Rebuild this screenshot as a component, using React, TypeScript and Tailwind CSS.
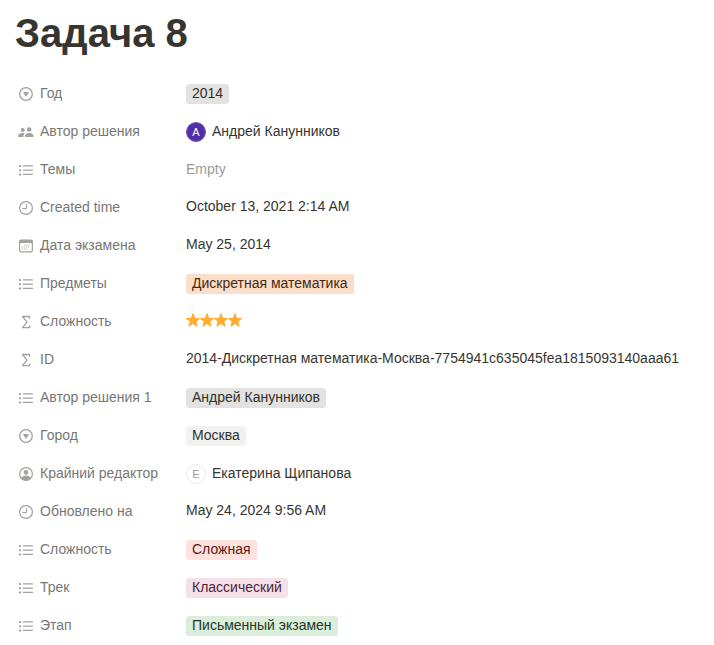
import type { ReactNode } from "react";

type IconName = "select" | "people" | "list" | "clock" | "calendar" | "sigma" | "person";

const shapes: Record<IconName, ReactNode> = {
  select: (
    <>
      <circle cx="7" cy="7" r="6.3" fill="none" stroke="currentColor" strokeWidth="1.3" />
      <path d="M4.700 5h4.600c.4 0 .6.4.4.7L7.400 9.300c-.2.300-.6.300-.8 0L4.300 5.700c-.2-.3 0-.7.4-.7z" />
    </>
  ),
  people: (
    <>
      <circle cx="10.200" cy="4.500" r="2.300" />
      <path d="M6.600 12c-.5 0-.8-.3-.8-.8 0-1.700 1.700-3.300 4.400-3.300s4.500 1.600 4.500 3.300c0 .5-.3.800-.8.800z" />
      <circle cx="3.800" cy="5" r="2" />
      <path d="M-.2 12c-.5 0-.8-.3-.8-.8 0-1.500 1.800-3.100 4.600-3.100.8 0 1.400.1 2 .4-1 .9-1.500 2.200-1 3.500z" />
    </>
  ),
  list: (
    <>
      <rect x="0" y="2" width="2" height="2" rx=".5" />
      <rect x="0" y="6.200" width="2" height="2" rx=".5" />
      <rect x="0" y="10.400" width="2" height="2" rx=".5" />
      <rect x="3.800" y="2.300" width="10.200" height="1.300" rx=".5" />
      <rect x="3.800" y="6.500" width="10.200" height="1.300" rx=".5" />
      <rect x="3.800" y="10.700" width="10.200" height="1.300" rx=".5" />
    </>
  ),
  clock: (
    <>
      <circle cx="7" cy="7" r="6.400" fill="none" stroke="currentColor" strokeWidth="1.200" />
      <path d="M7.500 3.200v4.300H3.800" fill="none" stroke="currentColor" strokeWidth="1.100" strokeLinecap="round" />
    </>
  ),
  calendar: (
    <>
      <path
        fillRule="evenodd"
        d="M2.400.6h9.200C13.200.6 14 1.400 14 2.900v8.200c0 1.500-.8 2.300-2.400 2.300H2.400C.8 13.400 0 12.600 0 11.100V2.900C0 1.400.8.600 2.400.6zM1.200 5v6c0 .8.5 1.200 1.200 1.200h9.200c.7 0 1.200-.4 1.200-1.200V5c0-.7-.4-1-1-1H2.200c-.6 0-1 .3-1 1z"
      />
      <path
        d="M5.300 6h6M2.700 8h8.600M2.700 10h6.200"
        fill="none"
        stroke="currentColor"
        strokeWidth="1.200"
        strokeDasharray="1.200 .8"
        opacity=".75"
      />
    </>
  ),
  sigma: (
    <path
      d="M10.500 3.200V1.500H3.500L8 7.200 3.500 12.700h7.200v-1.900"
      fill="none"
      stroke="currentColor"
      strokeWidth="1.300"
      strokeLinejoin="round"
      strokeLinecap="round"
    />
  ),
  person: (
    <>
      <circle cx="7" cy="7" r="6.400" fill="none" stroke="currentColor" strokeWidth="1.200" />
      <circle cx="7" cy="5.400" r="2.300" />
      <path d="M2.300 11c.8-1.600 2.500-2.500 4.700-2.500s3.900.9 4.700 2.500C10.400 12.600 8.800 13.200 7 13.200S3.600 12.600 2.300 11z" />
    </>
  ),
};

function Icon({ name }: { name: IconName }) {
  return (
    <svg viewBox="0 0 14 14" className="size-3.5 shrink-0 overflow-visible text-[#a1a19d]" fill="currentColor" aria-hidden="true">
      {shapes[name]}
    </svg>
  );
}

function Tag({ tone, children }: { tone: string; children: ReactNode }) {
  return <span className={`inline-flex h-5 items-center rounded-[3px] px-1.5 pb-0.5 ${tone}`}>{children}</span>;
}

function Person({ initial, tone, name }: { initial: string; tone: string; name: string }) {
  return (
    <span className="flex items-center gap-1.5">
      <span className={`flex size-5 items-center justify-center rounded-full border text-[11px] leading-none ${tone}`}>
        {initial}
      </span>
      <span className="pb-0.5">{name}</span>
    </span>
  );
}

function Plain({ children }: { children: ReactNode }) {
  return <span className="pb-1">{children}</span>;
}

function Stars({ count }: { count: number }) {
  return (
    <span className="flex pb-1" role="img" aria-label={`${count} из 5`}>
      {Array.from({ length: count }, (_, i) => (
        <svg key={i} viewBox="0 0 14 14" className="size-3.5" fill="#ffac33" aria-hidden="true">
          <path d="M7 .3c.3 0 .5.2.6.5l1.500 4.100h4.200c.7 0 .8.7.4 1l-3.400 2.600 1.200 4.200c.2.600-.3 1-.9.700L7 10.900l-3.600 2.500c-.6.300-1.100-.1-.9-.7l1.200-4.200L.3 5.900c-.4-.3-.3-1 .4-1h4.200L6.400.8c.1-.3.3-.5.6-.5z" />
        </svg>
      ))}
    </span>
  );
}

const rows: { icon: IconName; label: string; value: ReactNode }[] = [
  { icon: "select", label: "Год", value: <Tag tone="bg-[#e3e2e0] text-[#32302c]">2014</Tag> },
  {
    icon: "people",
    label: "Автор решения",
    value: <Person initial="А" tone="border-[#7659b8] bg-[#512da8] text-white" name="Андрей Канунников" />,
  },
  { icon: "list", label: "Темы", value: <span className="pb-0.5 text-[#9b9a97]">Empty</span> },
  { icon: "clock", label: "Created time", value: <Plain>October 13, 2021 2:14 AM</Plain> },
  { icon: "calendar", label: "Дата экзамена", value: <Plain>May 25, 2014</Plain> },
  { icon: "list", label: "Предметы", value: <Tag tone="bg-[#fadec9] text-[#49290e]">Дискретная математика</Tag> },
  { icon: "sigma", label: "Сложность", value: <Stars count={4} /> },
  {
    icon: "sigma",
    label: "ID",
    value: <Plain>2014-Дискретная математика-Москва-7754941c635045fea1815093140aaa61</Plain>,
  },
  { icon: "list", label: "Автор решения 1", value: <Tag tone="bg-[#e3e2e0] text-[#32302c]">Андрей Канунников</Tag> },
  { icon: "select", label: "Город", value: <Tag tone="bg-[#f1f1ef] text-[#32302c]">Москва</Tag> },
  {
    icon: "person",
    label: "Крайний редактор",
    value: <Person initial="Е" tone="border-[#eaeae9] bg-white text-[#9b9a97]" name="Екатерина Щипанова" />,
  },
  { icon: "clock", label: "Обновлено на", value: <Plain>May 24, 2024 9:56 AM</Plain> },
  { icon: "list", label: "Сложность", value: <Tag tone="bg-[#ffe2dd] text-[#5d1715]">Сложная</Tag> },
  { icon: "list", label: "Трек", value: <Tag tone="bg-[#f5e0e9] text-[#4c2337]">Классический</Tag> },
  { icon: "list", label: "Этап", value: <Tag tone="bg-[#dbeddb] text-[#1c3829]">Письменный экзамен</Tag> },
];

export default function App() {
  return (
    <main className="bg-white px-[15px] pt-[9px] font-['Liberation_Sans',Arial,sans-serif] text-[#37352f]">
      <h1 className="text-[40px] leading-[48px] font-bold">Задача 8</h1>
      <dl className="mt-5 flex flex-col gap-1 text-sm">
        {rows.map((row, i) => (
          <div key={i} className="flex h-[34px] items-center">
            <dt className="flex w-[171px] shrink-0 items-center gap-[7px] pl-1 text-[#787774]">
              <Icon name={row.icon} />
              <span className="pb-0.5">{row.label}</span>
            </dt>
            <dd className="flex min-w-0 items-center whitespace-nowrap">{row.value}</dd>
          </div>
        ))}
      </dl>
    </main>
  );
}
